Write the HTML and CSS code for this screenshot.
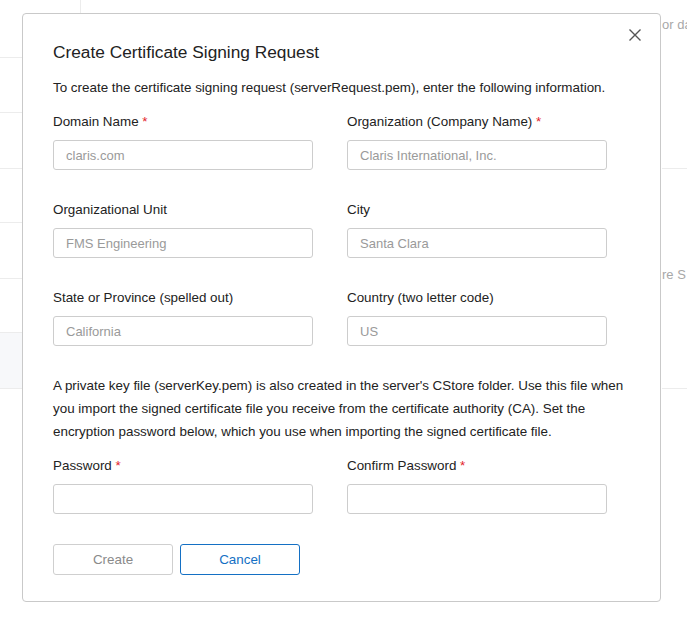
FILE: index.html
```html
<!DOCTYPE html>
<html>
<head>
<meta charset="utf-8">
<link rel="stylesheet" href="styles.css">
</head>
<body>
<div class="backdrop">
  <div class="bg-col-line"></div>
  <div class="bg-rows-left">
    <div class="bg-row r1"></div>
    <div class="bg-row r2"></div>
    <div class="bg-row r3"></div>
    <div class="bg-row r4"></div>
    <div class="bg-row r5"></div>
    <div class="bg-row r6"></div>
  </div>
  <div class="bg-right">
    <div class="bg-text t1">or da</div>
    <div class="bg-hline h1"></div>
    <div class="bg-text t2">re S</div>
    <div class="bg-hline h2"></div>
  </div>
</div>
<div class="dialog">
  <button class="close" aria-label="Close">
    <svg width="14" height="14" viewBox="0 0 14 14"><path d="M1.5 1.5 L12.5 12.5 M12.5 1.5 L1.5 12.5" stroke="#555" stroke-width="1.4" fill="none"/></svg>
  </button>
  <h1 class="title">Create Certificate Signing Request</h1>
  <p class="intro">To create the certificate signing request (serverRequest.pem), enter the following information.</p>
  <div class="grid">
    <div class="field">
      <label>Domain Name <span class="req">*</span></label>
      <input type="text" placeholder="claris.com">
    </div>
    <div class="field">
      <label>Organization (Company Name) <span class="req">*</span></label>
      <input type="text" placeholder="Claris International, Inc.">
    </div>
    <div class="field">
      <label>Organizational Unit</label>
      <input type="text" placeholder="FMS Engineering">
    </div>
    <div class="field">
      <label>City</label>
      <input type="text" placeholder="Santa Clara">
    </div>
    <div class="field">
      <label>State or Province (spelled out)</label>
      <input type="text" placeholder="California">
    </div>
    <div class="field">
      <label>Country (two letter code)</label>
      <input type="text" placeholder="US">
    </div>
  </div>
  <p class="note">A private key file (serverKey.pem) is also created in the server's CStore folder. Use this file when you import the signed certificate file you receive from the certificate authority (CA). Set the encryption password below, which you use when importing the signed certificate file.</p>
  <div class="grid pw">
    <div class="field">
      <label>Password <span class="req">*</span></label>
      <input type="password">
    </div>
    <div class="field">
      <label>Confirm Password <span class="req">*</span></label>
      <input type="password">
    </div>
  </div>
  <div class="actions">
    <button class="btn btn-create">Create</button>
    <button class="btn btn-cancel">Cancel</button>
  </div>
</div>
</body>
</html>
```
FILE: styles.css
```css
html, body {
  margin: 0;
  padding: 0;
  background: #fff;
  font-family: "Liberation Sans", Arial, sans-serif;
  color: #222;
}
body {
  width: 687px;
  height: 632px;
  overflow: hidden;
  position: relative;
}
.backdrop {
  position: absolute;
  inset: 0;
}
.bg-col-line {
  position: absolute;
  left: 80px;
  top: 0;
  width: 1px;
  height: 14px;
  background: #ececec;
}
.bg-rows-left {
  position: absolute;
  left: 0;
  top: 0;
  width: 30px;
}
.bg-row {
  position: absolute;
  left: 0;
  width: 30px;
  height: 1px;
  background: #ececec;
}
.r1 { top: 57px; }
.r2 { top: 112px; }
.r3 { top: 168px; }
.r4 { top: 222px; }
.r5 { top: 278px; }
.r6 { top: 332px; height: 55px; background: #f7f8fa; border-top: 1px solid #ececec; border-bottom: 1px solid #ececec; }
.bg-right {
  position: absolute;
  left: 662px;
  top: 0;
  width: 25px;
  height: 632px;
  overflow: hidden;
}
.bg-text {
  position: absolute;
  left: 0;
  font-size: 13px;
  color: #a8a8a8;
  white-space: nowrap;
}
.t1 { top: 17px; }
.t2 { top: 267px; }
.bg-hline {
  position: absolute;
  left: 0;
  width: 25px;
  height: 1px;
  background: #ececec;
}
.h1 { top: 168px; }
.h2 { top: 388px; }

.dialog {
  position: absolute;
  left: 22px;
  top: 13px;
  width: 577px;
  padding: 27px 30px 26px 30px;
  border: 1px solid #c9c9c9;
  border-radius: 4px;
  background: #fff;
  box-sizing: content-box;
}
.close {
  position: absolute;
  right: 18px;
  top: 14px;
  width: 14px;
  height: 14px;
  padding: 0;
  border: 0;
  background: transparent;
  display: flex;
}
.title {
  margin: 0;
  font-size: 17.3px;
  font-weight: normal;
  line-height: 22px;
  color: #222;
}
.intro {
  margin: 15px 0 0;
  font-size: 13.4px;
  line-height: 20px;
  width: 570px;
  white-space: nowrap;
}
.grid {
  display: grid;
  grid-template-columns: 260px 260px;
  column-gap: 34px;
  row-gap: 30px;
  margin-top: 14px;
}
.field {
  display: flex;
  flex-direction: column;
  gap: 8px;
}
.field label {
  font-size: 13.4px;
  line-height: 20px;
  color: #222;
}
.req {
  color: #e3212a;
}
.field input {
  box-sizing: border-box;
  width: 260px;
  height: 30px;
  border: 1px solid #cdcdcd;
  border-radius: 3px;
  padding: 0 12px;
  font-family: "Liberation Sans", Arial, sans-serif;
  font-size: 13px;
  color: #222;
  background: #fff;
  outline: none;
}
.field input::placeholder {
  color: #9a9a9a;
}
.note {
  margin: 28px 0 0;
  font-size: 13.4px;
  line-height: 23px;
  width: 577px;
}
.grid.pw {
  margin-top: 13px;
}
.actions {
  display: flex;
  gap: 7px;
  margin-top: 30px;
}
.btn {
  box-sizing: border-box;
  width: 120px;
  height: 31px;
  border-radius: 3px;
  background: #fff;
  font-family: "Liberation Sans", Arial, sans-serif;
  font-size: 13.4px;
  padding: 0;
}
.btn-create {
  border: 1px solid #cfcfcf;
  color: #8a8a8a;
}
.btn-cancel {
  border: 1px solid #1470c4;
  color: #1470c4;
}
```
